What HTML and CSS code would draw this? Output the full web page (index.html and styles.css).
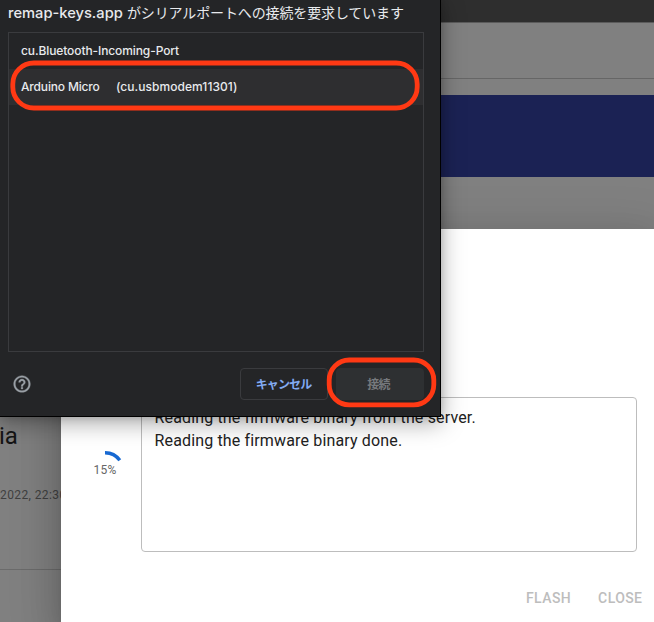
FILE: index.html
```html
<!DOCTYPE html>
<html lang="ja">
<head>
<meta charset="utf-8">
<title>Remap</title>
<link rel="stylesheet" href="styles.css">
</head>
<body>
<main class="page">
  <div class="browser-bar"></div>
  <header class="site-header"></header>
  <div class="banner"></div>
  <section class="firmware">
    <h2 class="firmware-name">ia</h2>
    <p class="firmware-date">2022, 22:30</p>
  </section>
</main>

<section class="modal">
  <div class="modal-content">
    <div class="progress">
      <svg class="progress-arc" viewBox="0 0 40 40"><path d="M20 2.700A18 18 0 0 1 34.8 10.300" fill="none" stroke="#1769d2" stroke-width="3.4"/></svg>
      <span class="progress-label">15%</span>
    </div>
    <div class="log"><p>Reading the firmware binary from the server.</p><p>Reading the firmware binary done.</p></div>
  </div>
  <footer class="modal-actions"><span>FLASH</span><span>CLOSE</span></footer>
</section>

<section class="chooser">
  <h1 class="chooser-title"><span class="origin">remap-keys.app</span><span class="request">がシリアルポートへの接続を要求しています</span></h1>
  <ul class="ports">
    <li class="port"><span>cu.Bluetooth-Incoming-Port</span></li>
    <li class="port selected"><span class="device-name">Arduino Micro</span><span class="device-path">(cu.usbmodem11301)</span><svg class="mark mark-port" viewBox="0 0 410 51"><rect x="2.800" y="3" width="404.400" height="45" rx="21"/></svg></li>
  </ul>
  <footer class="chooser-actions">
    <svg class="help" viewBox="0 0 24 24"><path fill="#9aa0a6" stroke="#9aa0a6" stroke-width=".4" d="M11 18h2v-2h-2v2zm1-16C6.48 2 2 6.48 2 12s4.480 10 10 10 10-4.480 10-10S17.520 2 12 2zm0 18c-4.410 0-8-3.590-8-8s3.590-8 8-8 8 3.590 8 8-3.590 8-8 8zm0-14c-2.210 0-4 1.790-4 4h2c0-1.100.9-2 2-2s2 .9 2 2c0 2-3 1.750-3 5h2c0-2.250 3-2.500 3-5 0-2.210-1.790-4-4-4z"/></svg>
    <button class="button cancel">キャンセル</button>
    <div class="connect-wrap"><button class="button connect">接続</button><svg class="mark mark-connect" viewBox="0 0 111 51"><rect x="3.200" y="3" width="104.600" height="44.800" rx="20"/></svg></div>
  </footer>
</section>
</body>
</html>
```
FILE: styles.css
```css
* { box-sizing: border-box; }
html { overflow: hidden; }
body {
  margin: 0;
  width: 654px;
  height: 622px;
  overflow: hidden;
  position: relative;
  font-family: Roboto, "Noto Sans CJK JP", sans-serif;
}
h1, h2, p, ul { margin: 0; padding: 0; font-weight: 400; }
ul { list-style: none; }
.page { height: 622px; overflow: hidden; background: #808080; }
.browser-bar { height: 23px; background: #2e2e2e; border-bottom: 1px solid #5b5b5b; }
.site-header { height: 56px; border-bottom: 1px solid #666; }
.banner { height: 82px; margin-top: 16px; background: #1b2254; }
.firmware { height: 393px; padding-top: 244px; border-bottom: 1px solid #6b6b6b; color: #151515; }
.firmware-name { font-size: 24px; line-height: 30px; text-indent: -1px; }
.firmware-date { margin-top: 34px; font-size: 12px; line-height: 20px; letter-spacing: .4px; color: #404040; white-space: nowrap; }

.modal {
  position: absolute;
  left: 61px;
  top: 229px;
  width: 593px;
  height: 393px;
  padding-top: 168px;
  background: #fff;
  box-shadow: 0 11px 15px -7px rgba(0,0,0,.2), 0 24px 38px 3px rgba(0,0,0,.14), 0 9px 46px 8px rgba(0,0,0,.12);
}
.modal-content { display: flex; }
.progress { width: 80px; padding: 53px 0 0 24px; display: grid; align-content: start; }
.progress-arc, .progress-label { grid-area: 1 / 1; width: 40px; height: 40px; }
.progress-label { text-align: center; font-size: 12px; line-height: 40px; letter-spacing: .3px; color: #666; }
.log {
  width: 496px;
  height: 155px;
  padding: 9px 12.5px;
  border: 1px solid #bdbdbd;
  border-radius: 4px;
  font-size: 16px;
  line-height: 22.5px;
  letter-spacing: .15px;
  color: #212121;
  white-space: nowrap;
}
.modal-actions { display: flex; gap: 27px; padding: 34px 0 0 465px; font-size: 14px; line-height: 24px; font-weight: 500; letter-spacing: .4px; color: #bdbdbd; }

.chooser {
  position: absolute;
  left: -1px;
  top: -1px;
  width: 442px;
  height: 418px;
  padding-left: 8px;
  background: #242527;
  border: 1px solid #000;
  box-shadow: 0 6px 22px rgba(0,0,0,.34), 0 0 8px rgba(0,0,0,.16);
  font-family: Inter, "Noto Sans CJK JP", sans-serif;
  color: #e8eaed;
}
.chooser-title { display: flex; height: 32px; font-size: 14px; line-height: 26px; white-space: nowrap; }
.origin { width: 119px; font-size: 14.7px; font-weight: 500; }
.request { letter-spacing: -.13px; }
.ports { width: 416px; height: 320px; border: 1px solid #3a3b3e; font-size: 12px; font-weight: 500; letter-spacing: -.1px; }
.port { display: flex; align-items: center; height: 36px; padding: 0 0 2px 12px; white-space: nowrap; }
.selected { position: relative; padding-bottom: 1px; background: #2e2e30; }
.device-name { width: 95px; letter-spacing: -.17px; }
.device-path { letter-spacing: .05px; }
.mark { position: absolute; fill: none; stroke: #ff3914; stroke-width: 4.8px; pointer-events: none; }
.mark-port { left: 1px; top: -9px; width: 410px; height: 51px; }
.chooser-actions { display: flex; align-items: center; height: 64px; }
.help { width: 20px; height: 20px; margin: 0 208px 0 4px; }
.button { height: 32px; padding: 0; border: 1px solid #3a3b3e; border-radius: 4px; background: transparent; font: 700 12px/30px "Noto Sans CJK JP", sans-serif; }
.cancel { width: 88px; padding-right: 1px; color: #82aaf2; letter-spacing: -.9px; }
.connect-wrap { position: relative; margin-left: 8px; height: 32px; }
.connect { width: 88px; padding-right: 3px; background: #2e3032; border-color: #2e3032; color: #76797d; letter-spacing: -.8px; }
.mark-connect { left: -10px; top: -11px; width: 111px; height: 51px; }
```
